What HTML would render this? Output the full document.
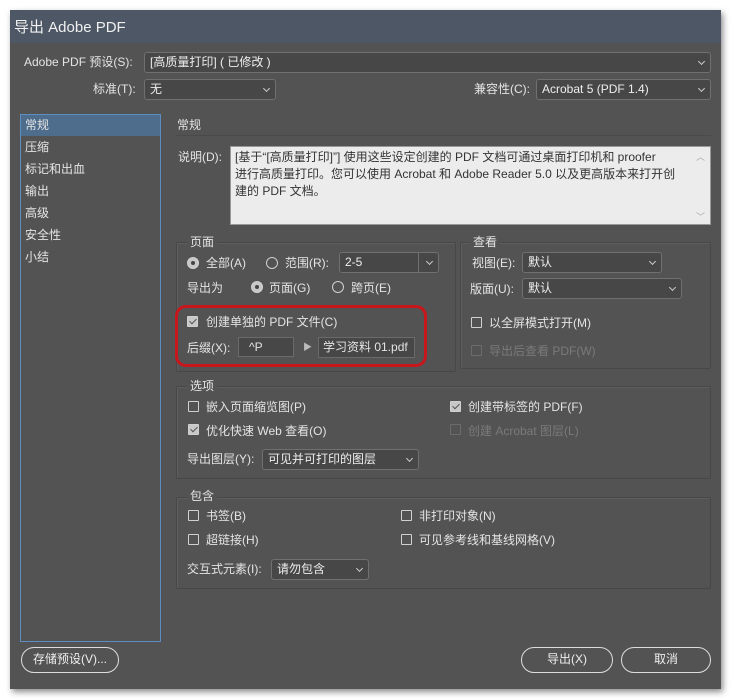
<!DOCTYPE html>
<html><head><meta charset="utf-8"><style>
*{box-sizing:border-box;margin:0;padding:0}
body{width:733px;height:700px;background:#fff;position:relative;overflow:hidden;font-family:"Liberation Sans","Noto Sans CJK SC",sans-serif;font-size:12px;color:#e4e4e4}
.dlg{position:absolute;left:10px;top:10px;width:711px;height:679px;background:#535353;box-shadow:2px 3px 6px rgba(0,0,0,.45)}
.tb{position:absolute;left:10px;top:10px;width:711px;height:33px;background:#4e5765;font-size:15px;color:#f0f0f0;padding:6px 0 0 4px}
.a{position:absolute;white-space:nowrap;line-height:14px}
.sel{position:absolute;background:#474747;border:1px solid #707070;border-radius:3px;padding:0 5px;line-height:19px;color:#eee;white-space:nowrap;overflow:hidden}
.sel .v{position:absolute;right:6px;top:6px;width:5px;height:5px;border-right:1px solid #ccc;border-bottom:1px solid #ccc;transform:rotate(45deg)}
.grp{position:absolute;border:1px solid #474747;box-shadow:inset 1px 1px 0 #5e5e5e;border-radius:2px}
.gt{position:absolute;background:#535353;padding:0 3px;line-height:14px}
.cb{position:absolute;width:11px;height:11px;border:1px solid #d0d0d0;border-radius:1px}
.cb.on{background:#c8c8c8}
.cb.on::after{content:"";position:absolute;left:3px;top:0px;width:3px;height:6px;border-right:1.5px solid #555;border-bottom:1.5px solid #555;transform:rotate(45deg)}
.cb.dis{border-color:#6c6c6c}
.rd{position:absolute;width:12px;height:12px;border:1px solid #d0d0d0;border-radius:50%}
.rd.on{background:#c8c8c8}
.rd.on::after{content:"";position:absolute;left:3px;top:3px;width:4px;height:4px;border-radius:50%;background:#444}
.dis{color:#7a7a7a}
.btn{position:absolute;border:1.5px solid #ddd;border-radius:13px;text-align:center;line-height:23px;color:#eee}
</style></head><body>
<div class="dlg"></div>
<div class="tb">导出 Adobe PDF</div>

<div class="a" style="left:24px;top:55px">Adobe PDF 预设(S):</div>
<div class="sel" style="left:144px;top:52px;width:567px;height:21px">[高质量打印] ( 已修改 )<span class="v"></span></div>
<div class="a" style="left:93px;top:82px">标准(T):</div>
<div class="sel" style="left:144px;top:79px;width:132px;height:21px">无<span class="v"></span></div>
<div class="a" style="left:474px;top:82px">兼容性(C):</div>
<div class="sel" style="left:536px;top:79px;width:175px;height:21px">Acrobat 5 (PDF 1.4)<span class="v"></span></div>

<div style="position:absolute;left:20px;top:114px;width:141px;height:528px;border:1px solid #5d8ec0;background:#535353"></div>
<div style="position:absolute;left:21px;top:115px;width:139px;height:21px;background:#4e6c8c"></div>
<div class="a" style="left:25px;top:118px">常规</div>
<div class="a" style="left:25px;top:140px">压缩</div>
<div class="a" style="left:25px;top:162px">标记和出血</div>
<div class="a" style="left:25px;top:184px">输出</div>
<div class="a" style="left:25px;top:206px">高级</div>
<div class="a" style="left:25px;top:228px">安全性</div>
<div class="a" style="left:25px;top:250px">小结</div>

<div class="a" style="left:177px;top:118px">常规</div>
<div style="position:absolute;left:176px;top:135px;width:535px;height:1px;background:#4a4a4a"></div>
<div class="a" style="left:178px;top:150px">说明(D):</div>
<div style="position:absolute;left:230px;top:146px;width:481px;height:79px;background:#ececec;border:1px solid #999;color:#333;padding:2px 0 0 4px;line-height:17px;font-size:12px;white-space:nowrap">[基于“[高质量打印]”] 使用这些设定创建的 PDF 文档可通过桌面打印机和 proofer<br>进行高质量打印。您可以使用 Acrobat 和 Adobe Reader 5.0 以及更高版本来打开创<br>建的 PDF 文档。</div>
<div class="a" style="left:696px;top:150px;color:#aaa;font-size:9px">︿</div>
<div class="a" style="left:696px;top:210px;color:#aaa;font-size:9px">﹀</div>

<div class="grp" style="left:176px;top:242px;width:280px;height:130px"></div>
<div class="gt" style="left:187px;top:235px">页面</div>
<div class="rd on" style="left:187px;top:257px"></div>
<div class="a" style="left:206px;top:256px">全部(A)</div>
<div class="rd" style="left:266px;top:257px"></div>
<div class="a" style="left:285px;top:256px">范围(R):</div>
<div class="sel" style="left:339px;top:252px;width:100px;height:21px">2-5<span style="position:absolute;left:78px;top:0;width:1px;height:19px;background:#707070"></span><span class="v"></span></div>
<div class="a" style="left:187px;top:281px">导出为</div>
<div class="rd on" style="left:251px;top:281px"></div>
<div class="a" style="left:269px;top:281px">页面(G)</div>
<div class="rd" style="left:332px;top:281px"></div>
<div class="a" style="left:351px;top:281px">跨页(E)</div>
<div style="position:absolute;left:175px;top:305px;width:252px;height:62px;border:3px solid #c8161d;border-radius:11px"></div>
<div class="cb on" style="left:187px;top:316px"></div>
<div class="a" style="left:206px;top:315px">创建单独的 PDF 文件(C)</div>
<div class="a" style="left:187px;top:341px">后缀(X):</div>
<div style="position:absolute;left:238px;top:337px;width:56px;height:20px;background:#474747;border:1px solid #6a6a6a;padding-left:10px;line-height:18px">^P</div>
<div class="a" style="left:303px;top:340px;color:#bbb;font-size:9px">▶</div>
<div style="position:absolute;left:318px;top:337px;width:97px;height:21px;background:#474747;border:1px solid #6a6a6a;padding-left:4px;line-height:19px;overflow:hidden;white-space:nowrap">学习资料 01.pdf</div>

<div class="grp" style="left:460px;top:242px;width:251px;height:127px"></div>
<div class="gt" style="left:470px;top:235px">查看</div>
<div class="a" style="left:472px;top:256px">视图(E):</div>
<div class="sel" style="left:522px;top:252px;width:140px;height:21px">默认<span class="v"></span></div>
<div class="a" style="left:470px;top:282px">版面(U):</div>
<div class="sel" style="left:522px;top:278px;width:160px;height:21px">默认<span class="v"></span></div>
<div class="cb" style="left:471px;top:317px"></div>
<div class="a" style="left:489px;top:316px">以全屏模式打开(M)</div>
<div class="cb dis" style="left:471px;top:345px"></div>
<div class="a dis" style="left:489px;top:344px">导出后查看 PDF(W)</div>

<div class="grp" style="left:176px;top:386px;width:535px;height:93px"></div>
<div class="gt" style="left:187px;top:379px">选项</div>
<div class="cb" style="left:188px;top:401px"></div>
<div class="a" style="left:206px;top:400px">嵌入页面缩览图(P)</div>
<div class="cb on" style="left:188px;top:424px"></div>
<div class="a" style="left:206px;top:424px">优化快速 Web 查看(O)</div>
<div class="a" style="left:187px;top:452px">导出图层(Y):</div>
<div class="sel" style="left:262px;top:449px;width:157px;height:21px">可见并可打印的图层<span class="v"></span></div>
<div class="cb on" style="left:450px;top:401px"></div>
<div class="a" style="left:468px;top:400px">创建带标签的 PDF(F)</div>
<div class="cb dis" style="left:450px;top:424px"></div>
<div class="a dis" style="left:468px;top:424px">创建 Acrobat 图层(L)</div>

<div class="grp" style="left:176px;top:497px;width:535px;height:92px"></div>
<div class="gt" style="left:187px;top:489px">包含</div>
<div class="cb" style="left:188px;top:510px"></div>
<div class="a" style="left:206px;top:509px">书签(B)</div>
<div class="cb" style="left:188px;top:534px"></div>
<div class="a" style="left:206px;top:533px">超链接(H)</div>
<div class="cb" style="left:401px;top:510px"></div>
<div class="a" style="left:419px;top:509px">非打印对象(N)</div>
<div class="cb" style="left:401px;top:534px"></div>
<div class="a" style="left:419px;top:533px">可见参考线和基线网格(V)</div>
<div class="a" style="left:187px;top:562px">交互式元素(I):</div>
<div class="sel" style="left:271px;top:559px;width:98px;height:21px">请勿包含<span class="v"></span></div>

<div class="btn" style="left:21px;top:647px;width:98px;height:26px">存储预设(V)...</div>
<div class="btn" style="left:521px;top:647px;width:92px;height:26px">导出(X)</div>
<div class="btn" style="left:621px;top:647px;width:90px;height:26px;border-width:1px">取消</div>
</body></html>
